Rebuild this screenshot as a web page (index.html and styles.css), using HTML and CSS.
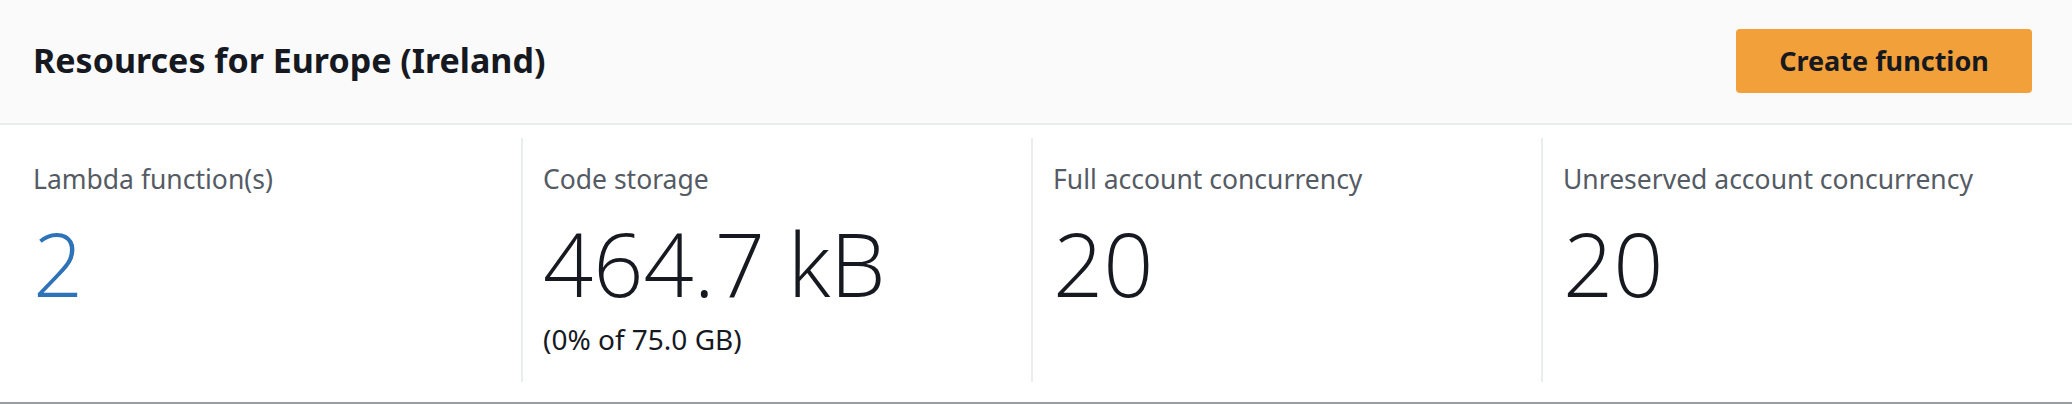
FILE: index.html
```html
<!DOCTYPE html>
<html lang="en">
<head>
<meta charset="utf-8">
<title>Resources for Europe (Ireland)</title>
<link rel="stylesheet" href="styles.css">
</head>
<body>
<section class="panel">
  <header class="panel-header">
    <h2 class="panel-title">Resources for Europe (Ireland)</h2>
    <button class="btn-primary" type="button">Create function</button>
  </header>
  <div class="panel-body">
    <div class="metric">
      <div class="metric-label">Lambda function(s)</div>
      <div class="metric-value metric-link">2</div>
    </div>
    <div class="metric">
      <div class="metric-label">Code storage</div>
      <div class="metric-value">464.7 kB</div>
      <div class="metric-sub">(0% of 75.0 GB)</div>
    </div>
    <div class="metric">
      <div class="metric-label">Full account concurrency</div>
      <div class="metric-value">20</div>
    </div>
    <div class="metric">
      <div class="metric-label">Unreserved account concurrency</div>
      <div class="metric-value">20</div>
    </div>
  </div>
</section>
</body>
</html>
```

FILE: styles.css
```css
* { box-sizing: border-box; }
html, body { margin: 0; padding: 0; background: #ffffff; }
body {
  font-family: "Noto Sans", "Open Sans", "Liberation Sans", sans-serif;
  color: #16191f;
  width: 2072px;
  height: 404px;
  overflow: hidden;
}
.panel {
  border-bottom: 2px solid #959ea0;
  height: 404px;
}
.panel-header {
  height: 125px;
  background: #fafafa;
  border-bottom: 2px solid #eaeded;
  display: flex;
  align-items: center;
  justify-content: space-between;
  padding: 0 40px 4px 33px;
}
.panel-title {
  margin: 0;
  font-size: 34px;
  font-weight: 700;
  line-height: 44px;
  color: #16191f;
}
.btn-primary {
  width: 296px;
  height: 64px;
  margin-top: 2px;
  border: none;
  border-radius: 4px;
  background: #f2a03a;
  color: #16191f;
  font-family: inherit;
  font-size: 27px;
  font-weight: 700;
  padding: 0;
}
.panel-body {
  display: grid;
  grid-template-columns: repeat(4, 510px);
  margin: 13px 0 0 11px;
  height: 244px;
}
.metric {
  padding: 23px 0 0 20px;
  border-left: 2px solid #eaeded;
}
.metric:first-child { border-left-color: transparent; }
.metric-label {
  font-size: 26.5px;
  line-height: 36px;
  color: #545b64;
}
.metric-value {
  font-family: "Open Sans", "Noto Sans", sans-serif;
  font-weight: 300;
  font-size: 88px;
  line-height: 100px;
  margin-top: 16px;
  color: #16191f;
}
.metric-link { color: #2e73b8; }
.metric-sub {
  font-size: 28px;
  line-height: 36px;
  margin-top: 8px;
  color: #16191f;
}
```
